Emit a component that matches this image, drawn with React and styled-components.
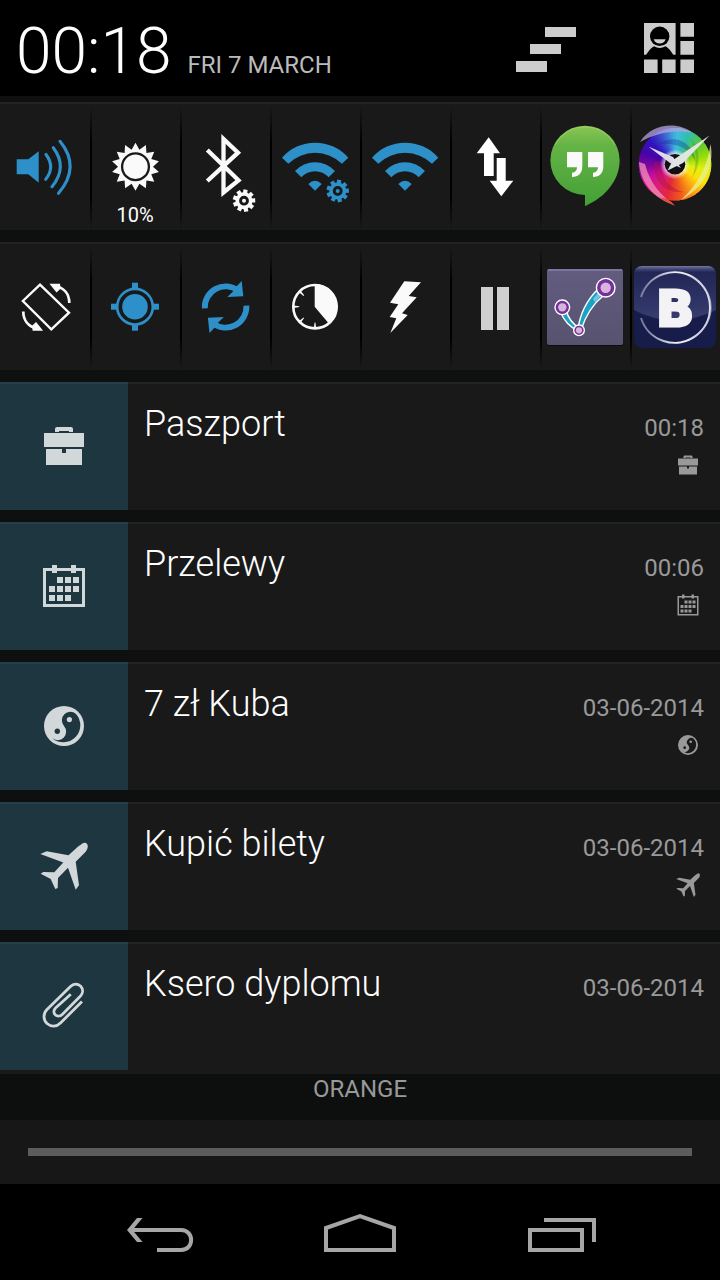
import React from 'react';
import styled, { createGlobalStyle } from 'styled-components';

const BLUE = '#2e90c8';
const WHITE = '#fafafa';

const GlobalStyle = createGlobalStyle`
  * { box-sizing: border-box; }
  body {
    margin: 0;
    background: #000;
    font-family: Roboto, "Liberation Sans", sans-serif;
  }
`;

const Screen = styled.div`
  min-height: 100vh;
  display: flex;
  flex-direction: column;
  background: #0e0f0f;
`;

const Header = styled.header`
  display: flex;
  align-items: center;
  height: 96px;
  background: #000;
`;

const DateTime = styled.div`
  flex: 1;
  display: flex;
  align-items: baseline;
  gap: 16px;
  padding: 8px 0 0 16px;
  white-space: nowrap;
`;

const Clock = styled.time`
  color: #fff;
  font-size: 64px;
  line-height: 76px;
  font-weight: 300;
`;

const Today = styled.span`
  color: #bbb;
  font-size: 24px;
  line-height: 28px;
`;

const HeaderActions = styled.div`
  display: flex;
  gap: 28px;
`;

const IconButton = styled.button`
  display: flex;
  align-items: center;
  justify-content: center;
  flex: ${(p) => (p.$grow ? 1 : 'none')};
  min-width: 0;
  padding: 0;
  border: 0;
  background: none;
  cursor: pointer;
`;

const Panel = styled.main`
  flex: 1;
  display: flex;
  flex-direction: column;
  gap: 12px;
  padding-top: 6px;
`;

const TileRow = styled.section`
  display: grid;
  grid-template-columns: repeat(8, 1fr);
  height: 128px;
  background: #191919;
  box-shadow: inset 0 2px #232323;
`;

const Tile = styled.button`
  display: grid;
  place-items: center;
  padding: 0;
  border: 0;
  min-width: 0;
  overflow: hidden;
  cursor: pointer;
  background: ${(p) =>
    p.$first
      ? 'none'
      : 'linear-gradient(transparent 4px, #000 40px, #000 96px, transparent) left / 2px 100% no-repeat'};

  > * { grid-area: 1 / 1; }
`;

const TileLabel = styled.span`
  align-self: end;
  padding-bottom: 3px;
  color: #fff;
  font-family: Roboto, "Liberation Sans", sans-serif;
  font-size: 20px;
  line-height: 24px;
`;

const Notifications = styled.ul`
  display: flex;
  flex-direction: column;
  gap: 12px;
  margin: 0;
  padding: 0;
  list-style: none;
`;

const Card = styled.li`
  display: flex;
  align-items: flex-start;
  min-height: 128px;
  background: #191919;
  box-shadow: inset 0 2px #232323;

  &:last-child { min-height: 132px; }
`;

const CardIcon = styled.div`
  display: flex;
  align-items: center;
  justify-content: center;
  flex: none;
  width: 128px;
  height: 128px;
  color: #d2d7d9;
  background: #1e3640;
  box-shadow: inset 0 2px #243f4a;
`;

const CardTitle = styled.h2`
  flex: 1;
  min-width: 0;
  margin: 0;
  padding: 20px 16px 0;
  color: #fff;
  font-size: 36px;
  line-height: 44px;
  font-weight: 300;
`;

const CardMeta = styled.div`
  display: flex;
  flex-direction: column;
  align-items: flex-end;
  gap: 7px;
  padding: 32px 16px 0 0;
  color: #999;
  font-size: 24px;
  line-height: 28px;
`;

const Footer = styled.footer`
  display: flex;
  flex-direction: column;
`;

const Carrier = styled.p`
  margin: 0;
  padding-bottom: 16px;
  color: #999;
  background: #0d0f0e;
  font-size: 24px;
  line-height: 30px;
  text-align: center;
`;

const Handle = styled.button`
  height: 64px;
  padding: 0 28px;
  border: 0;
  background: #171717;
  cursor: pointer;
`;

const Grip = styled.span`
  display: block;
  height: 8px;
  background: #5c5c5c;
`;

const NavBar = styled.nav`
  display: flex;
  height: 96px;
  padding: 0 60px;
  background: #000;
`;

const TileSvg = ({ children }) => (
  <svg width="90" height="128" viewBox="0 0 90 128" aria-hidden="true">{children}</svg>
);

const polar = (cx, cy, r, a) => [
  (cx + r * Math.sin(a)).toFixed(2),
  (cy - r * Math.cos(a)).toFixed(2),
];

const starPoints = (cx, cy, count, outer, inner) =>
  Array.from({ length: count * 2 }, (_, i) =>
    polar(cx, cy, i % 2 ? inner : outer, (i * Math.PI) / count).join(',')
  ).join(' ');

const Gear = ({ x, y, color }) => (
  <g transform={`translate(${x} ${y})`}>
    {Array.from({ length: 9 }, (_, i) => (
      <rect key={i} x="-2.1" y="-11.2" width="4.2" height="5" fill={color} transform={`rotate(${i * 40 + 8})`} />
    ))}
    <circle r="6.7" fill="none" stroke={color} strokeWidth="3.6" />
    <circle r="2" fill={color} />
  </g>
);

const SoundIcon = () => (
  <TileSvg>
    <path fill={BLUE} d="M16.7 57.3H28.3L38.7 49.3V80.7L28.3 72.3H16.7Z" />
    <g fill="none" stroke={BLUE} strokeWidth="3.1" strokeLinecap="round">
      <path d="M46 52.5Q55.5 65 45.7 77.3" />
      <path d="M53.3 45.7Q68 65 52 84.7" />
      <path d="M60 39.3Q81 65 58.5 91.3" />
    </g>
  </TileSvg>
);

const BrightnessIcon = () => (
  <TileSvg>
    <polygon points={starPoints(45.5, 64.7, 14, 24, 17.5)} fill={WHITE} />
    <circle cx="45.5" cy="64.7" r="13.4" fill={WHITE} stroke="#191919" strokeWidth="2.3" />
  </TileSvg>
);

const BluetoothIcon = () => (
  <TileSvg>
    <path d="M27.3 48 58.5 78.3 43.5 90.5V37L58 50.7 27.3 79" fill="none" stroke={WHITE} strokeWidth="4.3" />
    <Gear x={64} y={98.7} color={WHITE} />
  </TileSvg>
);

const WifiIcon = ({ gear }) => (
  <TileSvg>
    <g fill={BLUE}>
      <path d="M12 55.7A44 44 0 0 1 78.3 55.7L72 61.7A38.6 38.6 0 0 0 18.3 61.7Z" />
      <path d="M25 69A27 27 0 0 1 65 69L58.7 75.3A18.6 18.6 0 0 0 31.3 75.3Z" />
      <path d="M38.3 82Q45 75.6 51.7 82L45 88.7Z" />
    </g>
    {gear && <Gear x={67.7} y={89} color={BLUE} />}
  </TileSvg>
);

const DataIcon = () => (
  <TileSvg>
    <path fill="#fff" d="M38.7 35.3 50 51.3H43.7V74H34V51.3H26.7Z" />
    <path fill="#fff" d="M46.7 56H55.7V78.7H63.3L51.3 94.3 39.7 78.7H46.7Z" />
  </TileSvg>
);

const QUOTE = 'M27 50H42.3V64.5C42.3 71 38.5 75 32 75V70.8C35.2 70.3 37 68.5 37 65.3H27Z';

const HangoutsIcon = () => (
  <TileSvg>
    <defs>
      <linearGradient id="hangouts" x1="0" y1="0" x2="0" y2="1">
        <stop offset="0" stopColor="#8ac653" />
        <stop offset="0.25" stopColor="#64b345" />
        <stop offset="1" stopColor="#43a035" />
      </linearGradient>
    </defs>
    <path
      fill="url(#hangouts)"
      d="M45 23.7A34.65 34.65 0 0 1 79.65 58.35C79.65 78 66 95 45 104.3V93A34.65 34.65 0 0 1 45 23.7Z"
    />
    <path d="M15 43A33.8 33.8 0 0 1 75 43" fill="none" stroke="#a9d67c" strokeWidth="1" opacity="0.6" />
    <path fill={WHITE} d={QUOTE} />
    <path fill={WHITE} d={QUOTE} transform="translate(21 0)" />
  </TileSvg>
);

const WHEEL_STOPS = [
  [64, 190, 224], [50, 190, 170], [90, 200, 50], [150, 220, 10], [225, 238, 20],
  [255, 225, 10], [252, 160, 20], [240, 90, 30], [226, 40, 60], [218, 30, 120],
  [205, 15, 155], [130, 5, 160], [70, 5, 165], [50, 20, 190], [60, 90, 205],
];

const wheelColor = (t) => {
  const pos = t * WHEEL_STOPS.length;
  const i = Math.floor(pos) % WHEEL_STOPS.length;
  const next = WHEEL_STOPS[(i + 1) % WHEEL_STOPS.length];
  const mix = WHEEL_STOPS[i].map((c, k) => Math.round(c + (next[k] - c) * (pos % 1)));
  return `rgb(${mix.join(',')})`;
};

const WHEEL_WEDGES = 90;

const WheelIcon = () => {
  const cx = 45;
  const cy = 62.3;
  const step = (Math.PI * 2) / WHEEL_WEDGES;
  return (
    <TileSvg>
      <defs>
        <radialGradient id="wheelHalo">
          <stop offset="0.6" stopColor="#fff" stopOpacity="0.85" />
          <stop offset="1" stopColor="#fff" stopOpacity="0" />
        </radialGradient>
      </defs>
      {Array.from({ length: WHEEL_WEDGES }, (_, i) => {
        const [x1, y1] = polar(cx, cy, 36.3, i * step);
        const [x2, y2] = polar(cx, cy, 36.3, (i + 1.6) * step);
        return (
          <path
            key={i}
            fill={wheelColor(i / WHEEL_WEDGES)}
            d={`M${cx} ${cy}L${x1} ${y1}A36.3 36.3 0 0 1 ${x2} ${y2}Z`}
          />
        );
      })}
      <path d="M10 40C22 21 48 19 63 31 45 27 26 31 10 40Z" fill="#b4a2e0" opacity="0.75" />
      <path d="M80.500 42C85 64 74 86 51 98 68 82 77 66 80.500 42Z" fill="#e8f090" opacity="0.75" />
      <path d="M9 60C10 80 24 97 44 103 32 94 20 82 15 62Z" fill="#f090b8" opacity="0.75" />
      <path d="M33 96Q40 97 45 104L30 96Z" fill="#ec4a30" />
      <path d="M24 60C23 80 36 92 54 90 38 86 30 74 32 60Z" fill="#b01040" opacity="0.4" />
      <path d="M28 42C44 32 62 38 66 60 60 46 46 40 28 42Z" fill="#10309a" opacity="0.35" />
      <path d="M60 36C70 46 72 62 62 76 67 62 68 48 60 36Z" fill="#208a20" opacity="0.3" />
      <circle cx={cx} cy={cy} r="15" fill="url(#wheelHalo)" />
      <circle cx={cx} cy={cy} r="10.3" fill="#111" />
      <path d="M18.7 44.7 43 55 51 66 40 61Z" fill="#dcdce6" />
      <path d="M79.5 33.500 43 58 37.5 68.500 53 61Z" fill="#dfe5e2" />
    </TileSvg>
  );
};

const RotateIcon = () => (
  <TileSvg>
    <path d="M40 42.6 69 70.7 51.3 87.3 22.9 59Z" fill="none" stroke={WHITE} strokeWidth="2.4" />
    {[0, 180].map((a) => (
      <g key={a} transform={`rotate(${a} 46.3 65.3)`}>
        <path d="M69.3 61C69.3 52 64 46 56 44" fill="none" stroke={WHITE} strokeWidth="2.7" />
        <path d="M49.5 41.8 60 41.8 60.5 46.8 56.500 50.500Z" fill={WHITE} />
      </g>
    ))}
  </TileSvg>
);

const LocationIcon = () => (
  <TileSvg>
    <g fill={BLUE}>
      <circle cx="45" cy="64.7" r="12.8" />
      <circle cx="45" cy="64.7" r="17.8" fill="none" stroke={BLUE} strokeWidth="2.6" />
      {[0, 90, 180, 270].map((a) => (
        <rect key={a} x="42" y="40.7" width="6" height="6.5" transform={`rotate(${a} 45 64.7)`} />
      ))}
    </g>
  </TileSvg>
);

const SyncIcon = () => (
  <TileSvg>
    {[0, 180].map((a) => (
      <g key={a} transform={`rotate(${a} 45.6 65)`}>
        <path d="M24.8 66.3A20.8 20.8 0 0 1 58 48.5" fill="none" stroke={BLUE} strokeWidth="5.8" />
        <path d="M61.7 39 63.3 54.3 47.3 55 53.5 49 56.5 44.5Z" fill={BLUE} />
      </g>
    ))}
  </TileSvg>
);

const TimerIcon = () => (
  <TileSvg>
    <circle cx="45" cy="64.7" r="21.7" fill="none" stroke={WHITE} strokeWidth="2.6" />
    <path d="M44.7 42V64.7L59 81.7A22.3 22.3 0 0 0 44.7 42Z" fill={WHITE} />
    {[180, 225, 270, 315].map((a) => (
      <path key={a} d="M43.800 43H46.200L45.400 49H44.600Z" transform={`rotate(${a} 45 64.7)`} fill={WHITE} />
    ))}
  </TileSvg>
);

const BoltIcon = () => (
  <TileSvg>
    <path
      fill={WHITE}
      d="M44.3 39.3 61 40.3 48.7 54 56.7 55.3 42 71.3 47.7 73 30.3 91 36.3 76.3 29.7 75 38.3 62.3 30 60.7Z"
    />
  </TileSvg>
);

const PauseIcon = () => (
  <TileSvg>
    <path fill="#d0d0d0" d="M31 45H43V88H31ZM47 45H59V88H47Z" />
  </TileSvg>
);

const GraphNode = ({ x, y, r }) => (
  <g>
    <circle cx={x} cy={y} r={r} fill="#fff" />
    <circle cx={x} cy={y} r={r - 1.4} fill="#76309a" />
    <circle cx={x} cy={y} r={r * 0.52} fill="#d7b4dc" />
  </g>
);

const GraphIcon = () => (
  <TileSvg>
    <defs>
      <linearGradient id="graph" x1="0" y1="0" x2="0" y2="1">
        <stop offset="0" stopColor="#625d80" />
        <stop offset="1" stopColor="#57526e" />
      </linearGradient>
    </defs>
    <rect x="7" y="28" width="76" height="76" rx="2" fill="#0c0c10" />
    <rect x="7" y="27" width="76" height="76" rx="2" fill="url(#graph)" />
    <path d="M8 28H82" stroke="#8580ab" strokeWidth="1.6" />
    <g fill="#1aa3c6" stroke="#fff" strokeWidth="1.4">
      <path d="M20.5 70C24 79 30 85 38 89L39 86C32 81 28 76 26.5 69Z" />
      <path d="M38 87C40 72 47 58 58 47L64 53C53 62 46 72 41 88Z" />
    </g>
    <path d="M53 57 59 50 62 53 55 60Z" fill="#7cc4dc" />
    <GraphNode x={65.7} y={45.7} r={10} />
    <GraphNode x={22.3} y={65.3} r={8} />
    <GraphNode x={39} y={88.3} r={6} />
  </TileSvg>
);

const BadgeIcon = () => (
  <TileSvg>
    <defs>
      <clipPath id="badge"><rect x="4" y="24" width="82" height="82" rx="8" /></clipPath>
      <linearGradient id="badgeGloss" x1="0" y1="0" x2="0" y2="1">
        <stop offset="0" stopColor="#8d91b8" stopOpacity="0.8" />
        <stop offset="0.12" stopColor="#4b5088" stopOpacity="0.2" />
        <stop offset="1" stopColor="#5a6094" stopOpacity="0.5" />
      </linearGradient>
      <linearGradient id="badgeRing" x1="0" y1="0" x2="1" y2="0">
        <stop offset="0" stopColor="#9a9dbb" stopOpacity="0.7" />
        <stop offset="0.5" stopColor="#f0f0f4" />
        <stop offset="1" stopColor="#e0e0ea" />
      </linearGradient>
    </defs>
    <g clipPath="url(#badge)">
      <rect x="4" y="24" width="82" height="82" fill="#171c4b" />
      <path d="M4 24H86V68Q66 78 45 78 22 78 4 68Z" fill="url(#badgeGloss)" />
    </g>
    <path d="M11 55A35.3 35.3 0 1 1 11 76" fill="none" stroke="url(#badgeRing)" strokeWidth="2" />
    <path d="M59 34A33.5 33.5 0 0 1 59 97" fill="none" stroke="#b9bbd0" strokeWidth="1.2" opacity="0.7" />
    <text
      x="45"
      y="84"
      textAnchor="middle"
      fontFamily="'DejaVu Sans', sans-serif"
      fontWeight="700"
      fontSize="50"
      fill="#f3f3f5"
      stroke="#f3f3f5"
      strokeWidth="3"
    >
      B
    </text>
  </TileSvg>
);

const GLYPHS = {
  briefcase: (
    <path
      fillRule="evenodd"
      d="M23 18V15Q23 13 25 13H39Q41 13 41 15V18H37V17H27V18ZM12 19H52V33H12ZM14 35H30V39H34V35H50V51H14Z"
    />
  ),
  calendar: (
    <>
      <path d="M12.5 15.5H51.5V51.5H12.5Z" fill="none" stroke="currentColor" strokeWidth="3" />
      <path d="M20 11H25V19H20ZM39 11H44V19H39Z" />
      <path d="M25 23h6v6h-6zM33 23h6v6h-6zM41 23h6v6h-6zM17 32h6v6h-6zM25 32h6v6h-6zM33 32h6v6h-6zM41 32h6v6h-6zM17 41h6v6h-6zM25 41h6v6h-6zM33 41h6v6h-6z" />
    </>
  ),
  yinyang: (
    <>
      <path
        fillRule="evenodd"
        d="M32 12A20 20 0 1 1 32 52A20 20 0 1 1 32 12ZM44 20A17 17 0 0 1 20 44A8.5 8.5 0 0 0 32 32A8.5 8.5 0 0 1 44 20ZM25.3 34.6A2.7 2.7 0 1 0 25.3 40A2.7 2.7 0 1 0 25.3 34.6Z"
      />
      <circle cx="37.4" cy="25.6" r="2.6" />
    </>
  ),
  plane: (
    <path d="M51.5 9C53.5 8 56 9.8 55.8 12.3 55.6 15 54.5 17 53 18.6L43.7 27.8 47 51.3 43.7 55.8 36 33.8 26 44 25.7 54 23.3 55 18.7 45 8.7 39.7 11.3 38 22.3 38.3 31.3 28.6 8.3 20 14.7 17.3 36.5 21.3 45 13.5C47.5 11.5 49.5 10 51.5 9Z" />
  ),
  clip: (
    <path
      d="M50 27.5 28.5 49C24.5 53 19 53 15 49.5 11 45.5 11 39.5 15 35.5L38.5 12.5C41.5 9.5 45.5 9.5 48.5 12 51.3 15 51.3 19 48.5 22L30.5 40.2C28 42.7 25 42.5 23.2 40.8 21.3 39 21.5 36 23.8 33.8L38.8 20.3"
      fill="none"
      stroke="currentColor"
      strokeWidth="2.8"
    />
  ),
};

const Glyph = ({ name, size }) => (
  <svg width={size} height={size} viewBox="0 0 64 64" fill="currentColor" aria-hidden="true">
    {GLYPHS[name]}
  </svg>
);

const TILES = [
  [
    { name: 'Sound', icon: <SoundIcon /> },
    { name: 'Brightness', icon: <BrightnessIcon />, label: '10%' },
    { name: 'Bluetooth settings', icon: <BluetoothIcon /> },
    { name: 'Wi-Fi settings', icon: <WifiIcon gear /> },
    { name: 'Wi-Fi', icon: <WifiIcon /> },
    { name: 'Mobile data', icon: <DataIcon /> },
    { name: 'Hangouts', icon: <HangoutsIcon /> },
    { name: 'Clock', icon: <WheelIcon /> },
  ],
  [
    { name: 'Auto-rotate', icon: <RotateIcon /> },
    { name: 'Location', icon: <LocationIcon /> },
    { name: 'Sync', icon: <SyncIcon /> },
    { name: 'Screen timeout', icon: <TimerIcon /> },
    { name: 'Flashlight', icon: <BoltIcon /> },
    { name: 'Pause', icon: <PauseIcon /> },
    { name: 'Routes', icon: <GraphIcon /> },
    { name: 'B', icon: <BadgeIcon /> },
  ],
];

const NOTES = [
  { title: 'Paszport', time: '00:18', glyph: 'briefcase', small: true },
  { title: 'Przelewy', time: '00:06', glyph: 'calendar', small: true },
  { title: '7 zł Kuba', time: '03-06-2014', glyph: 'yinyang', small: true },
  { title: 'Kupić bilety', time: '03-06-2014', glyph: 'plane', small: true },
  { title: 'Ksero dyplomu', time: '03-06-2014', glyph: 'clip', small: false },
];

export default function App() {
  return (
    <Screen>
      <GlobalStyle />
      <Header>
        <DateTime>
          <Clock>00:18</Clock>
          <Today>FRI 7 MARCH</Today>
        </DateTime>
        <HeaderActions>
          <IconButton aria-label="Clear all">
            <svg width="96" height="96" viewBox="0 0 96 96" fill="#ccc">
              <path d="M45 27H76V37H45ZM30 44H61V54H30ZM16 61H47V72H16Z" />
            </svg>
          </IconButton>
          <IconButton aria-label="Quick settings">
            <svg width="96" height="96" viewBox="0 0 96 96" fill="#ccc">
              <path d="M20 23H51.6V54.7H20ZM56.4 23H70V36.7H56.4ZM56.4 41H70V54.7H56.4ZM56.4 59.4H70V73H56.4ZM38.2 59.4H51.6V73H38.2ZM20 59.4H33.6V73H20Z" />
              <path fill="#000" d="M22 55C24.5 51 27 48 30 46.3Q35.7 49.5 41.5 46.3C44.5 48 47 51 49.4 55Z" />
              <circle cx="35.7" cy="36.3" r="9.7" fill="#000" />
              <path d="M29.7 39.3H41.7Q40 43.6 35.7 43.6 31.4 43.6 29.7 39.3Z" />
            </svg>
          </IconButton>
        </HeaderActions>
      </Header>
      <Panel>
        {TILES.map((row, r) => (
          <TileRow key={r}>
            {row.map((tile, i) => (
              <Tile key={tile.name} $first={i === 0} aria-label={tile.name}>
                {tile.icon}
                {tile.label && <TileLabel>{tile.label}</TileLabel>}
              </Tile>
            ))}
          </TileRow>
        ))}
        <Notifications>
          {NOTES.map((note) => (
            <Card key={note.title}>
              <CardIcon><Glyph name={note.glyph} size={64} /></CardIcon>
              <CardTitle>{note.title}</CardTitle>
              <CardMeta>
                <time>{note.time}</time>
                {note.small && <Glyph name={note.glyph} size={32} />}
              </CardMeta>
            </Card>
          ))}
        </Notifications>
      </Panel>
      <Footer>
        <Carrier>ORANGE</Carrier>
        <Handle aria-label="Close panel"><Grip /></Handle>
        <NavBar>
          <IconButton $grow aria-label="Back">
            <svg width="96" height="96" viewBox="0 0 96 96" fill="#a6a6a6">
              <path d="M15 46 25 34H30.5L20.5 46 30.5 58H25Z" />
              <path d="M18 46H69C82.5 46 82.5 66 69 66H45" fill="none" stroke="#a6a6a6" strokeWidth="4" />
            </svg>
          </IconButton>
          <IconButton $grow aria-label="Home">
            <svg width="96" height="96" viewBox="0 0 96 96">
              <path d="M14 66V44L48 32 82 44V66Z" fill="none" stroke="#a6a6a6" strokeWidth="4" />
            </svg>
          </IconButton>
          <IconButton $grow aria-label="Recent apps">
            <svg width="96" height="96" viewBox="0 0 96 96" fill="none" stroke="#a6a6a6" strokeWidth="4">
              <path d="M32 36H82V58" />
              <rect x="18" y="46" width="52" height="20" />
            </svg>
          </IconButton>
        </NavBar>
      </Footer>
    </Screen>
  );
}
